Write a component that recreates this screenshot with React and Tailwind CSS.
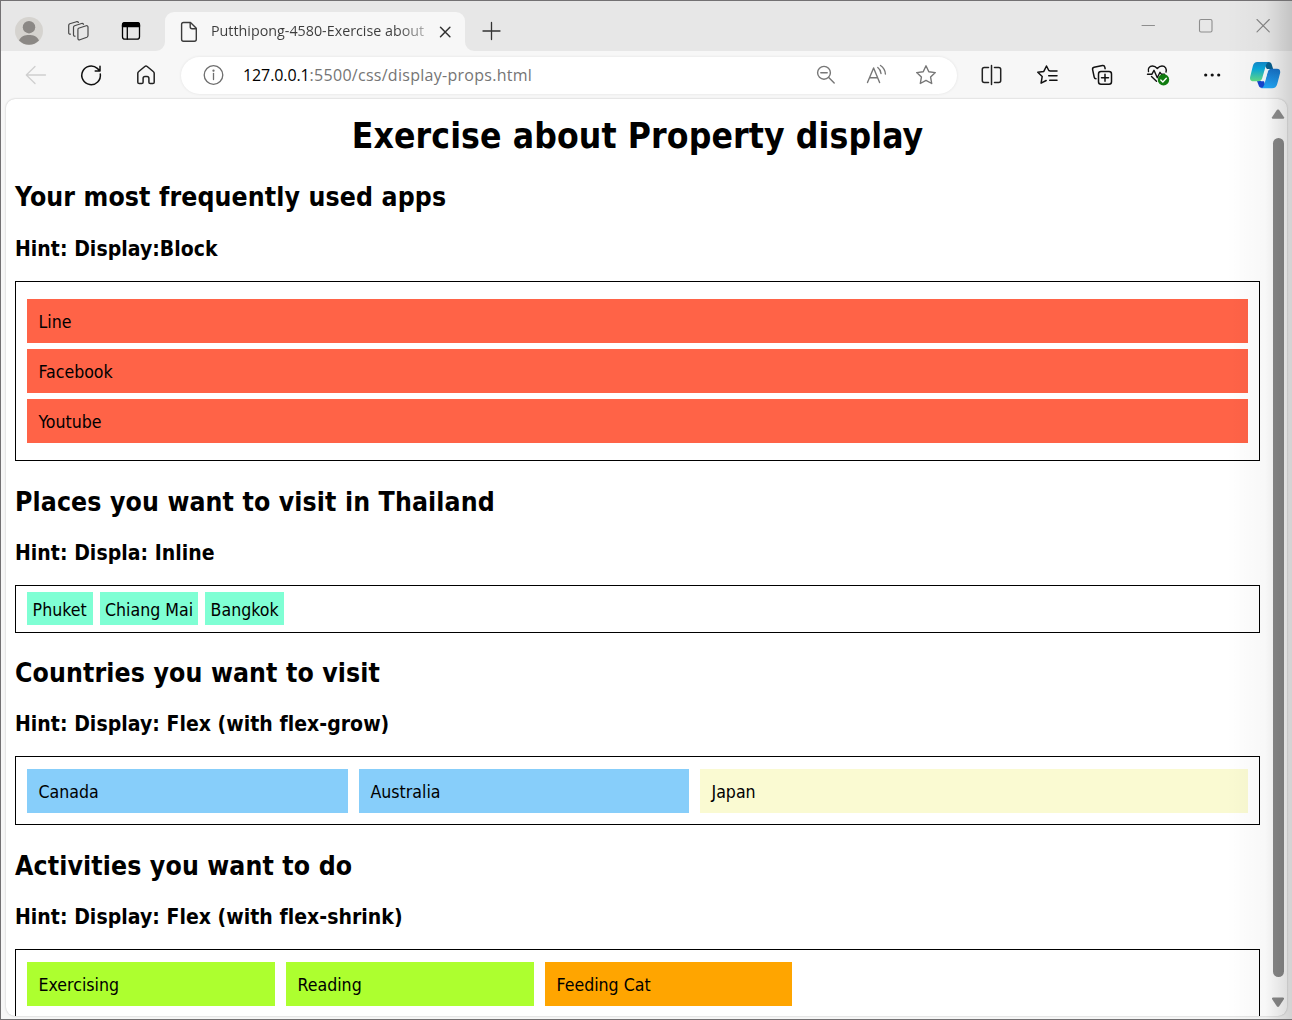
function Icon({ className = '', children, size = 24, stroke = '#1b1b1b', width = 1.3 }) {
  return (
    <svg
      className={'shrink-0 ' + className}
      width={size}
      height={size}
      viewBox={`0 0 ${size} ${size}`}
      fill="none"
      stroke={stroke}
      strokeWidth={width}
      strokeLinecap="round"
      strokeLinejoin="round"
    >
      {children}
    </svg>
  )
}

const STAR = 'M12 2.8l2.8 5.9 6.5.9-4.7 4.5 1.1 6.4-5.7-3.1-5.7 3.1 1.1-6.4-4.7-4.5 6.5-.9z'

function TabStrip() {
  return (
    <div className="flex h-[50px] shrink-0 bg-[#e7e7e7]">
      <div className="flex w-[164px] items-center pt-[10px]">
        <Icon className="ml-[14px]" size={28} stroke="none">
          <circle cx="14" cy="14" r="14" fill="#d5d3cf" />
          <circle cx="14" cy="10.2" r="6.2" fill="#8b8885" />
          <path d="M4 23.5c2-4.500 6-5.500 10-5.500s8 1 10 5.500a14 14 0 0 1-20 0z" fill="#8b8885" />
        </Icon>
        <Icon className="ml-[23px]" stroke="#4a4a4a" width={1.2}>
          <path d="M12.500 9.300l7.700-2.500c1-.3 1.800.2 1.800 1.200v8.600c0 .8-.4 1.300-1.100 1.600l-7 2.600c-1 .4-2-.2-2-1.200v-8.800c0-.8 0-1.200.6-1.500z" />
          <path d="M9 17.200c-1 .1-1.500-.5-1.500-1.400V8.300c0-.9.300-1.300 1.100-1.600l6.900-2.200c.9-.2 1.600 0 2 .8" />
          <path d="M4.400 15.200c-1.100.1-1.700-.5-1.700-1.500V6.400c0-.9.300-1.300 1.100-1.600l6.700-2.100c.9-.2 1.600 0 1.900.7" />
        </Icon>
        <Icon className="ml-[29px]" stroke="#000" width={1.3}>
          <rect x="3.500" y="3.700" width="17" height="16.500" rx="2.500" />
          <path d="M3.500 7.500V5.700c0-1.300.7-2 2-2h13c1.300 0 2 .7 2 2v1.800z" fill="#000" />
          <path d="M8.300 8v12" />
        </Icon>
      </div>
      <div className="relative mt-[11px] flex w-[300px] items-center rounded-t-[9px] bg-[#f7f7f7]">
        <svg className="absolute bottom-0 -left-[9px]" width="9" height="9" viewBox="0 0 9 9">
          <path d="M9 0v9H0a9 9 0 0 0 9-9z" fill="#f7f7f7" />
        </svg>
        <svg className="absolute bottom-0 -right-[9px]" width="9" height="9" viewBox="0 0 9 9">
          <path d="M0 0v9h9a9 9 0 0 1-9-9z" fill="#f7f7f7" />
        </svg>
        <Icon className="ml-[12px]" stroke="#3c3c3c" width={1.4}>
          <path d="M6.500 2.500h7l5.800 5.800v11c0 1.200-.7 1.900-1.900 1.900H6.500c-1.200 0-1.900-.7-1.900-1.900v-15c0-1.100.7-1.800 1.900-1.800z" />
          <path d="M13.200 2.800v4c0 1.200.7 1.900 1.900 1.900h3.900" />
        </Icon>
        <div className="mb-[2px] ml-[10px] w-[218px] bg-gradient-to-r from-[#3c3c3c] from-85% to-[#c4c4c4] to-100% bg-clip-text font-['Open_Sans',sans-serif] text-[14.3px] leading-[20px] whitespace-nowrap text-transparent">
          Putthipong-4580-Exercise about
        </div>
        <Icon className="ml-[4px]" stroke="#333" width={1.5}>
          <path d="M7.500 7.300l9.400 9.500M16.900 7.300l-9.400 9.500" />
        </Icon>
      </div>
      <Icon className="mt-[18px] ml-[15px]" stroke="#333" width={1.3}>
        <path d="M11.500 3.500v17M3 12h17" />
      </Icon>
      <div className="ml-auto flex pt-[12px]">
        <Icon className="mr-[34px]" stroke="#8e8e8e" width={1}>
          <path d="M6 12.500h12.500" />
        </Icon>
        <Icon className="mr-[33px]" stroke="#8e8e8e" width={1.1}>
          <rect x="5.500" y="6.500" width="12.500" height="12.500" rx="1.500" />
        </Icon>
        <Icon className="mr-[17px]" stroke="#858585" width={1.1}>
          <path d="M6 6.500l12.300 12.300M18.300 6.500L6 18.800" />
        </Icon>
      </div>
    </div>
  )
}

function Toolbar() {
  return (
    <div className="flex h-[48px] shrink-0 items-center bg-[#f7f7f7]">
      <Icon className="ml-[22px]" stroke="#cfcfcf" width={1.3}>
        <path d="M22.500 12h-19M12 3.500l-8.700 8.500 8.700 8.500" />
      </Icon>
      <Icon className="ml-[32px]" stroke="#111" width={1.5}>
        <path d="M21.300 11a9.300 9.300 0 1 1-3-5.600l2.500 2.300M21 3.200v4.700h-4.800" />
      </Icon>
      <Icon className="ml-[31px]" stroke="#222" width={1.5}>
        <path d="M3.800 10.200c0-.6.2-1 .7-1.400l6.300-5.300c.8-.7 1.600-.7 2.400 0l6.300 5.300c.5.400.7.800.7 1.400v9c0 .9-.5 1.400-1.400 1.400h-2.500c-.9 0-1.400-.5-1.400-1.400v-3.700c0-1.200-.7-1.900-1.900-1.900h-2c-1.200 0-1.900.7-1.900 1.900v3.700c0 .9-.5 1.400-1.400 1.400H5.200c-.9 0-1.400-.5-1.400-1.400z" />
      </Icon>
      <div className="ml-[23px] flex h-[37px] w-[776px] items-center rounded-full bg-white shadow-[0_0_3px_rgba(0,0,0,0.09)]">
        <Icon className="ml-[20px]" stroke="#6e6e6e" width={1.3}>
          <circle cx="12.500" cy="12" r="9.300" />
          <path d="M12.500 10.500v6" />
          <circle cx="12.500" cy="7.700" r=".5" fill="#6e6e6e" />
        </Icon>
        <div className="ml-[18px] font-['Open_Sans',sans-serif] text-[16px] leading-[24px] whitespace-nowrap">
          <span className="tracking-[-0.1px] text-black">127.0.0.1</span>
          <span className="tracking-[0.28px] text-[#757575]">:5500/css/display-props.html</span>
        </div>
        <Icon className="ml-auto" stroke="#777" width={1.4}>
          <circle cx="10" cy="9.800" r="6.400" />
          <path d="M14.700 14.600l5.500 5.500M6.800 9.800h6.400" />
        </Icon>
        <Icon className="ml-[27px]" stroke="#777" width={1.4}>
          <path d="M2.500 19.500L8.600 5l6 14.500M4.700 14.700h7.900M12.800 4.500c2 1.500 3 3.600 3.200 6M15.500 2.500c3 2 4.700 5.300 4.900 8.500" />
        </Icon>
        <Icon className="mr-[19px] ml-[25px]" stroke="#777" width={1.4}>
          <path d={STAR} />
        </Icon>
      </div>
      <Icon className="ml-[22px]" stroke="#222" width={1.5}>
        <path d="M9.500 4.500H5.300c-1.300 0-2 .7-2 2v11c0 1.300.7 2 2 2h4.200M15.500 4.500h4.200c1.300 0 2 .7 2 2v11c0 1.300-.7 2-2 2h-4.200M12.500 2.500v19" />
      </Icon>
      <Icon className="ml-[32px]" stroke="#111" width={1.5}>
        <path d="M14.500 7.700l-.7-.2L11.500 3 8.800 8.400l-6 .9 4.400 4.200-1.100 6.700 5.100-2.700M15 8.100h7M13.700 12.700h8.300M14.700 17.200H22" />
      </Icon>
      <Icon className="ml-[31px]" stroke="#111" width={1.5}>
        <path d="M6 15.700c-1 0-1.600-.6-1.800-1.600L2.600 6.600c-.2-1.200.3-2 1.500-2.300l8.400-1.700c1.200-.2 2 .3 2.300 1.500l.3 1.600" />
        <rect x="8.500" y="8.500" width="13" height="12.700" rx="2.500" />
        <path d="M15 11.300v7M11.500 14.800h7" />
      </Icon>
      <Icon className="ml-[31px]" stroke="#111" width={1.4} size={26}>
        <path d="M3.500 9.500C2.600 6.500 4.500 4 7.500 4c2 0 3.500 1 4.800 2.500C13.600 5 15 4 17 4c3.300 0 5 2.800 4 6M2.500 12.300h4.300l2.200-4 3.300 7.500 2.700-5.500 1.500 2h3M6.500 14.500l5 4.800" />
        <circle cx="18.500" cy="17.800" r="5.700" fill="#107c10" stroke="none" />
        <path d="M15.800 18l2 2 3.500-3.800" stroke="#fff" />
      </Icon>
      <Icon className="ml-[29px]" stroke="none">
        <g fill="#111">
          <circle cx="5.700" cy="12" r="1.600" />
          <circle cx="12.200" cy="12" r="1.600" />
          <circle cx="18.700" cy="12" r="1.600" />
        </g>
      </Icon>
      <svg className="ml-[25px] shrink-0" width="32" height="28" viewBox="0 0 32 28">
        <defs>
          <linearGradient id="teal" x1="0" y1="0" x2="0" y2="1">
            <stop offset="0" stopColor="#1287c8" />
            <stop offset=".35" stopColor="#08a8dc" />
            <stop offset="1" stopColor="#62dc85" />
          </linearGradient>
          <linearGradient id="blue" x1="0" y1="0" x2="0" y2="1">
            <stop offset="0" stopColor="#1872c8" />
            <stop offset="1" stopColor="#21a9fa" />
          </linearGradient>
        </defs>
        <path d="M15 1h4.500c2 0 2.800 1 3.400 3l1.200 4h-6.200l-3-5z" fill="#08608f" />
        <path d="M8 20h7l2 7h-3.500c-2.300 0-3.300-.8-4-3z" fill="#1544cf" />
        <path d="M8.500 1H20c-2 .5-2.700 2-3.200 3.800l-3.600 12.500c-.6 2-1.800 3-3.900 3H4.500c-3 0-4-2-3.200-5l2.500-10C4.600 2.300 6 1 8.500 1z" fill="url(#teal)" />
        <path d="M22.500 7.800H28c2.700 0 3.700 2 3 4.700l-2.700 10.200c-.8 3-2.400 4.600-5.200 4.600H12c1.900-.5 2.700-1.800 3.300-3.800l3.500-12.700c.6-2 1.800-3 3.700-3z" fill="url(#blue)" />
        <path d="M18 8h3.200c-1.700.3-2.200 1.300-2.600 2.800l-2.800 9.400h-3.900c1.500-.6 2-1.600 2.400-3z" fill="#eef8fc" />
      </svg>
    </div>
  )
}

function Section({ title, hint, className, hintClass = 'mt-[22px]', children }) {
  return (
    <section className={className}>
      <h2 className="h-[32px] text-[26.4px] leading-[32px] font-bold tracking-[0.12px]">{title}</h2>
      <h3 className={'mb-[19px] h-[26px] text-[21px] leading-[26px] font-bold tracking-[0.04px] ' + hintClass}>{hint}</h3>
      {children}
    </section>
  )
}

function Block({ className, children }) {
  return <div className={'h-[44px] pt-px pl-[11.5px] leading-[44px] ' + className}>{children}</div>
}

export default function App() {
  return (
    <div className="relative flex h-[1020px] w-[1292px] flex-col overflow-hidden border-t border-b border-l border-[#737173] bg-[#f7f7f7]">
      <TabStrip />
      <Toolbar />
      <div className="mr-[5px] ml-[5px] flex h-[917px] shrink-0 overflow-hidden rounded-[9px] bg-white shadow-[0_0_2px_rgba(0,0,0,0.25)]">
        <main className="ml-[9px] w-[1245px] shrink-0 font-['DejaVu_Sans_Condensed','DejaVu_Sans',sans-serif] text-[17.6px] text-black [font-stretch:condensed]">
          <h1 className="mt-[16px] h-[42px] text-center text-[35.2px] leading-[42px] font-bold tracking-[0.1px]">
            Exercise about Property display
          </h1>
          <Section className="mt-[24px]" hintClass="mt-[23px]" title="Your most frequently used apps" hint="Hint: Display:Block">
            <div className="flex h-[180px] flex-col gap-[6px] border border-black px-[11px] pt-[17px]">
              <Block className="bg-[#ff6347]">Line</Block>
              <Block className="bg-[#ff6347]">Facebook</Block>
              <Block className="bg-[#ff6347]">Youtube</Block>
            </div>
          </Section>
          <Section className="mt-[25px]" title="Places you want to visit in Thailand" hint="Hint: Displa: Inline">
            <div className="flex h-[48px] gap-[7px] border border-black px-[11px] pt-[6px] leading-[36px]">
              <div className="h-[33px] w-[66px] bg-[#7fffd4] pl-[5.6px]">Phuket</div>
              <div className="h-[33px] w-[98px] bg-[#7fffd4] pl-[5px]">Chiang Mai</div>
              <div className="h-[33px] w-[79px] bg-[#7fffd4] pl-[5.6px]">Bangkok</div>
            </div>
          </Section>
          <Section className="mt-[24px]" title="Countries you want to visit" hint="Hint: Display: Flex (with flex-grow)">
            <div className="flex h-[69px] gap-[11px] border border-black px-[11px] pt-[12px]">
              <Block className="w-[321px] bg-[#87cefa]">Canada</Block>
              <Block className="w-[330px] bg-[#87cefa]">Australia</Block>
              <Block className="grow bg-[#fafad2]">Japan</Block>
            </div>
          </Section>
          <Section className="mt-[25px]" title="Activities you want to do" hint="Hint: Display: Flex (with flex-shrink)">
            <div className="flex h-[69px] gap-[11px] border border-black px-[11px] pt-[12px]">
              <Block className="w-[248px] bg-[#adff2f]">Exercising</Block>
              <Block className="w-[248px] bg-[#adff2f]">Reading</Block>
              <Block className="w-[247px] bg-[#ffa500]">Feeding Cat</Block>
            </div>
          </Section>
        </main>
        <div className="ml-auto flex w-[16px] flex-col items-center pt-[10px]">
          <svg width="14" height="11" viewBox="0 0 14 11" className="mr-[2px] shrink-0">
            <path d="M6 .8Q7 0 8 .8l5 7.500q.5 1.500-1 1.500H2q-1.500 0-1-1.500z" fill="#909090" />
          </svg>
          <div className="mt-[18px] mr-[2px] h-[839px] w-[11px] shrink-0 rounded-full bg-[#8a8a8a]" />
          <svg width="14" height="11" viewBox="0 0 14 11" className="mt-[20px] mr-[2px] shrink-0">
            <path d="M6 9.500Q7 10.300 8 9.500l5-7.500q.5-1.500-1-1.500H2Q.500.500 1 2z" fill="#8a8a8a" />
          </svg>
        </div>
      </div>
      <div className="pointer-events-none absolute inset-y-0 right-0 w-[66px] bg-gradient-to-r from-transparent via-black/[0.03] via-60% to-black/[0.15]" />
    </div>
  )
}
